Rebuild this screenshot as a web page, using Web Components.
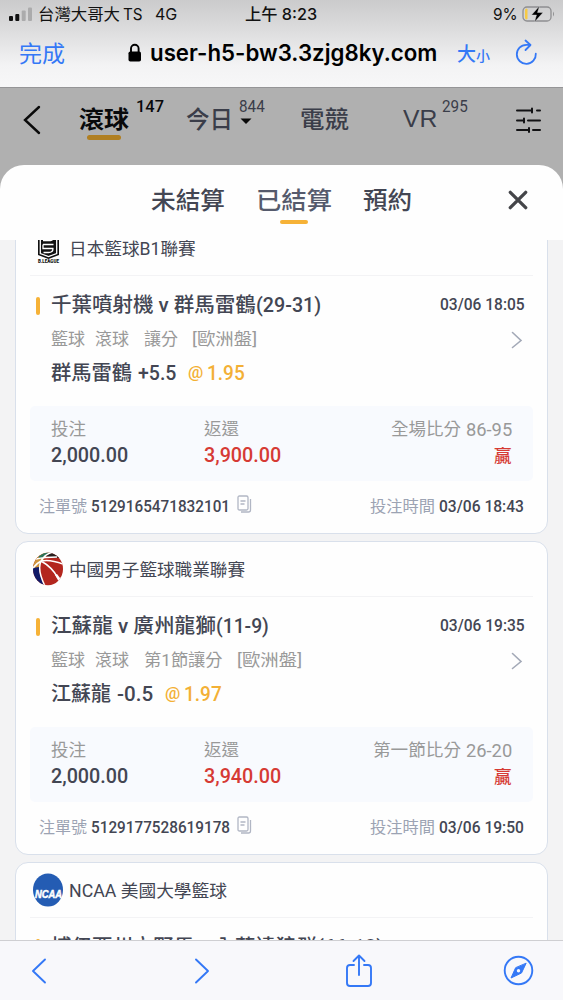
<!DOCTYPE html>
<html lang="zh-Hant">
<head>
<meta charset="utf-8">
<meta name="viewport" content="width=device-width">
<title>已結算</title>
<style>
html,body{margin:0;height:100%;overflow:hidden;background:#b0b0b0}
body{font-family:Roboto,"Noto Sans CJK TC",sans-serif;color:#41444f}
</style>
</head>
<body>
<bet-app></bet-app>
<script>
const define = (name, html, setup) => customElements.define(name, class extends HTMLElement {
  connectedCallback() {
    if (this.shadowRoot) return;
    const t = document.createElement('template');
    t.innerHTML = typeof html === 'function' ? html(this) : html;
    this.attachShadow({ mode: 'open' }).append(t.content.cloneNode(true));
    if (setup) setup(this);
  }
});

// A single line of text condensed or widened to the width given in "w".
define('fit-text', `<style>
:host{display:block;flex:none;white-space:nowrap;line-height:1.4}
span{display:inline-block;transform-origin:0 50%;white-space:pre}
</style><span><slot></slot></span>`, el => {
  const w = +el.getAttribute('w');
  el.style.width = w + 'px';
  const s = el.shadowRoot.querySelector('span');
  s.style.transform = `scaleX(${w / s.offsetWidth})`;
});

define('browser-bar', `<style>
:host{display:block;height:87px;border-bottom:1px solid #959597;background:linear-gradient(#cbcbcc,#dadadb 30%,#f3f3f4 75%,#f7f7f8);box-sizing:content-box;color:#111;font-family:Inter,"Noto Sans CJK TC",sans-serif}
.status{display:flex;height:28px;align-items:center;padding-left:9px;font-size:16px}
.url{display:flex;height:50px;align-items:center;padding-left:19px;color:#3478f6}
svg{flex:none;display:block}
</style>
<div class="status">
<svg width="24" height="16" viewBox="0 0 24 16"><rect y="10" width="4" height="5" rx="1" fill="#111"/><rect x="6.3" y="8" width="4" height="7" rx="1" fill="#111"/><rect x="12.7" y="4.500" width="4" height="10.500" rx="1" fill="#ababac"/><rect x="19" y="1.500" width="4" height="13.500" rx="1" fill="#ababac"/></svg>
<fit-text w="82" style="margin-left:5px">台灣大哥大</fit-text>
<fit-text w="20" style="margin-left:3px">TS</fit-text>
<fit-text w="22" style="margin-left:12px">4G</fit-text>
<fit-text w="72" style="margin-left:68px;font-weight:500">上午 8:23</fit-text>
<fit-text w="25" style="margin-left:176px">9%</fit-text>
<svg width="34" height="18" viewBox="0 0 34 18" style="margin-left:4px"><rect x="1" y="2" width="28" height="14" rx="4" fill="none" stroke="#8f8f91" stroke-width="1.300"/><path d="M31 6.500q2 2.500 0 5z" fill="#8f8f91"/><path d="M3.500 4.800Q3.500 4 5 4v10q-1.500 0-1.500-1z" fill="#f7ca45" stroke="#f7ca45"/><path d="M17.500 1L9.500 10h5l-2 7 8.500-9.500h-5.500z" fill="#000" stroke="#dadadb" stroke-width=".4"/></svg>
</div>
<div class="url">
<fit-text w="46" style="font-size:22.500px;margin-top:2px">完成</fit-text>
<svg width="14" height="20" viewBox="0 0 14 20" style="margin-left:63px"><rect x=".5" y="8.500" width="12.500" height="10" rx="1.800" fill="#000"/><path d="M3 9V5.500a3.800 3.800 0 0 1 7.600 0V9" fill="none" stroke="#000" stroke-width="1.900"/></svg>
<fit-text w="287" style="margin-left:8px;font-size:22.500px;font-weight:600;color:#000">user-h5-bw3.3zjg8ky.com</fit-text>
<fit-text w="19" style="margin-left:20px;font-size:19px;font-weight:500;margin-top:4px">大</fit-text>
<fit-text w="14" style="font-size:14px;margin-top:5px;font-weight:500">小</fit-text>
<svg width="24" height="28" viewBox="0 0 24 28" style="margin-left:25px"><path d="M20.800 14.700A9.500 9.500 0 1 1 11.300 5.800h4M10.500 1.500l5 4.500-5 5" fill="none" stroke="#3478f6" stroke-width="1.800" stroke-linecap="round" stroke-linejoin="round"/></svg>
</div>`);

define('sport-nav', `<style>
:host{display:flex;height:77px;box-sizing:border-box;padding:14px 0 0 22px;background:#b0b0b0;color:#3a3d49;align-items:flex-start;font-size:24px}
.tab{display:flex;flex-direction:column;align-items:center;height:50px;flex:none;padding-top:1.500px;box-sizing:border-box;font-weight:500}
.tab i{width:34px;height:5px;border-radius:3px;background:#b07f22;margin-top:-2px}
.n{font-size:17px;line-height:1;margin-top:-4px}
.sel{color:#08090b;font-weight:700}
svg{display:block;flex:none}
.v{display:flex;flex-direction:column;margin-left:8px}
</style>
<svg width="20" height="34" viewBox="0 0 20 34" style="margin-top:1px"><path d="M17 4L3 17l14 13" fill="none" stroke="#0a0a0a" stroke-width="2.400" stroke-linecap="round"/></svg>
<div class="tab sel" style="margin-left:37px"><fit-text w="50">滾球</fit-text><i></i></div>
<fit-text class="n sel" w="28" style="margin-left:7px;font-weight:500">147</fit-text>
<div class="tab" style="margin-left:22px"><fit-text w="47">今日</fit-text></div>
<div class="v" style="margin-left:6px"><fit-text class="n" w="26">844</fit-text><svg width="14" height="8" viewBox="0 0 14 8" style="margin-top:2px"><path d="M1.500 1.500h11L7 7z" fill="#090909"/></svg></div>
<div class="tab" style="margin-left:35px"><fit-text w="49">電競</fit-text></div>
<div class="tab" style="margin-left:54px;padding-top:0;font-family:'Liberation Sans';font-weight:400"><fit-text w="34">VR</fit-text></div>
<fit-text class="n" w="26" style="margin-left:5px">295</fit-text>
<svg width="27" height="28" viewBox="0 0 27 28" style="margin:4px 0 0 47px"><path d="M2 4.500h15M22 4.500h3M17 2.500v4M2 14.500h7M13 14.500h12M9 12.500v4M2 24h12M18 24h7M14 22v4" fill="none" stroke="#121214" stroke-width="2" stroke-linecap="round"/></svg>`);

define('sheet-tabs', `<style>
:host{display:flex;flex:none;height:75px;box-sizing:border-box;padding:20px 0 0 151px;background:#fefefe;border-radius:24px 24px 0 0;color:#434653;font-size:24px;font-weight:500;align-items:flex-start}
div{display:flex;flex-direction:column;align-items:center;margin:0 31px;color:#555a6c}
i{width:28px;height:4px;border-radius:2px;background:#f6b237;margin-top:1px}
svg{margin:5px 0 0 96px;flex:none}
</style>
<fit-text w="74">未結算</fit-text><div><fit-text w="76">已結算</fit-text><i></i></div><fit-text w="49">預約</fit-text>
<svg width="20" height="20" viewBox="0 0 20 20"><path d="M2.300 2.300l15.400 15.400M17.700 2.300L2.300 17.700" stroke="#444549" stroke-width="3.300" stroke-linecap="round"/></svg>`);

const logos = {
  b: `<svg width="30" height="34" viewBox="0 0 30 34"><path d="M5 3h21v21l-10.500 4L5 24z" fill="#111"/><path d="M7.300 4v18.500l8.200 3 8.200-3V4M10 9.500h7.500q2.500 0 2.500-3M10 13.500h10.500M10 13.500v4h10.500M20 17.500q0 4-4.500 4H10.500" fill="none" stroke="#fff" stroke-width="1.300"/><text x="5" y="32" font-family="Roboto" font-weight="900" font-size="4.500" textLength="21" lengthAdjust="spacingAndGlyphs" fill="#111">B.LEAGUE</text></svg>`,
  cba: `<svg width="30" height="34" viewBox="0 0 30 34"><defs><clipPath id="c"><ellipse cx="15" cy="17" rx="15" ry="16.300"/></clipPath></defs><g clip-path="url(#c)"><path d="M0 0h30v34H0z" fill="#b3261e"/><path d="M0 0h16L8 11 5 17 0 19z" fill="#ce943d"/><path d="M6 4L12 0h5l-5 5-7 2z" fill="#2e7359"/><path d="M12 4L17 0h10l-1 6-9-1z" fill="#27201f"/><path d="M0 16l6-1 1 8 4 11H0z" fill="#111a67"/><path d="M30 23l-3 3-3-4-2 1 4 7-1 4h5z" fill="#fff"/><path d="M8 9q9-2 22 3M3 7q9-2 21-2M8 9Q4 18 12 34M8 9q11 6 17 17M0 16q4-5 8-7Q12 2 20 0" fill="none" stroke="#fff" stroke-width="1.500"/></g></svg>`,
  ncaa: `<svg width="30" height="34" viewBox="0 0 30 34"><ellipse cx="15" cy="17" rx="15" ry="16.500" fill="#245cb3"/><text x="2" y="24.500" font-family="Liberation Sans" font-weight="700" font-style="italic" font-size="10.500" textLength="27" lengthAdjust="spacingAndGlyphs" fill="#fff" stroke="#fff" stroke-width=".5">NCAA</text></svg>`
};
define('league-logo', el => `<style>:host{display:block;width:30px;height:34px;flex:none}svg{display:block}</style>${logos[el.getAttribute('kind')]}`);

const bets = [
  { logo: 'b', league: '日本籃球B1聯賽', lw: 127, t: '千葉噴射機 v 群馬雷鶴', tw: 205, s: '(29-31)', sw: 65, date: '03/06 18:05',
    sub: [['籃球', 34, 0], ['滾球', 34, 10], ['讓分', 34, 15], ['[歐洲盤]', 65, 14]], p: '群馬雷鶴', pw: 81, h: '+5.5', hw: 38, o: '1.95', ret: '3,900.00',
    sl: '全場比分', slw: 70, sc: '86-95', id: '5129165471832101', at: '03/06 18:43' },
  { logo: 'cba', league: '中國男子籃球職業聯賽', lw: 176, t: '江蘇龍 v 廣州龍獅', tw: 165, s: '(11-9)', sw: 53, date: '03/06 19:35',
    sub: [['籃球', 34, 0], ['滾球', 34, 10], ['第1節讓分', 79, 15], ['[歐洲盤]', 65, 14]], p: '江蘇龍', pw: 60, h: '-0.5', hw: 36, o: '1.97', ret: '3,940.00',
    sl: '第一節比分', slw: 88, sc: '26-20', id: '5129177528619178', at: '03/06 19:50' },
  { logo: 'ncaa', league: 'NCAA 美國大學籃球', lw: 158, t: '博伊西州立野馬 v 內華達狼群', tw: 266, s: '(66-18)', sw: 66, date: '03/06 19:00' }
];

define('bet-card', el => {
  const b = bets[+el.getAttribute('index')];
  return `<style>
:host{display:block;flex:none;box-sizing:border-box;height:314px;border:1px solid #d9e0eb;border-radius:13px;background:#fefefe;padding:0 14px;color:#434653;font-weight:500}
.row{display:flex;align-items:center}
.league{height:54px;border-bottom:1px solid #f3f3f5;padding-left:3px;font-size:17.500px;font-weight:400}
.league fit-text{margin:2px 0 0 6px;color:#434653}
.title{height:34px;margin-top:12px;font-size:20px}
.title i{width:4.500px;height:18px;border-radius:2px;background:#f6b237;margin:2px 11px 0 5.500px}
.push{margin-left:auto}
.sub{height:34px;margin-top:1px;padding:0 10px 0 21px;font-size:17px;color:#999;font-weight:400}
.pick{height:34px;margin-top:-1px;padding-left:21px;font-size:20px}
.odd{color:#f3b035}
.box{display:grid;grid-template-columns:153px 1fr auto;box-sizing:border-box;height:75px;margin-top:16px;padding:11px 21px 0;background:#f8fafe;border-radius:5px}
.box>div{display:flex;flex-direction:column}
.lab{display:flex;height:26px;align-items:center;font-size:17px;color:#999;font-weight:400;gap:5px}
.val{display:flex;height:26px;align-items:center;font-size:20px;margin-top:-1px}
.val.win{margin-top:0}
.red{color:#d63a34}
.foot{height:52px;padding:0 9px;font-size:16.500px}
.foot .k{color:#9ca3b3;font-weight:400;margin-right:4px;font-size:16px}
svg{flex:none}
</style>
<div class="row league"><league-logo kind="${b.logo}"></league-logo><fit-text w="${b.lw}">${b.league}</fit-text></div>
<div class="row title"><i></i><fit-text w="${b.tw}">${b.t}</fit-text><fit-text w="${b.sw}">${b.s}</fit-text><fit-text class="push" w="85" style="font-size:17px;margin-right:8px">${b.date}</fit-text></div>
${b.sub ? `<div class="row sub">${b.sub.map(([t, w, m]) => `<fit-text w="${w}" style="margin-left:${m}px">${t}</fit-text>`).join('')}<svg class="push" width="12" height="18" viewBox="0 0 12 18"><path d="M1.500 1.500L10 9.500l-8.500 7" fill="none" stroke="#a3a9b7" stroke-width="1.600" stroke-linecap="round"/></svg></div>
<div class="row pick"><fit-text w="${b.pw}">${b.p}</fit-text><fit-text w="${b.hw}" style="margin-left:6px">${b.h}</fit-text><fit-text class="odd" w="15" style="margin-left:12px;font-size:17px">@</fit-text><fit-text class="odd" w="38" style="margin-left:4px">${b.o}</fit-text></div>
<div class="box"><div><span class="lab"><fit-text w="35">投注</fit-text></span><span class="val"><fit-text w="77">2,000.00</fit-text></span></div>
<div><span class="lab"><fit-text w="35">返還</fit-text></span><span class="val red"><fit-text w="77">${b.ret}</fit-text></span></div>
<div style="align-items:flex-end"><span class="lab"><fit-text w="${b.slw}">${b.sl}</fit-text><fit-text w="46" style="font-size:17.500px">${b.sc}</fit-text></span><span class="val win red"><fit-text w="18" style="font-size:17.500px">贏</fit-text></span></div></div>
<div class="row foot"><fit-text class="k" w="48">注單號</fit-text><fit-text w="139">${b.id}</fit-text><svg width="16" height="18" viewBox="0 0 16 18" style="margin:-6px 0 0 7px"><path d="M2.500 1h7q1.500 0 1.500 1.500v11q0 1.500-1.500 1.500h-7Q1 15 1 13.500v-11Q1 1 2.500 1zM3.500 6h5M3.500 9h4M13.500 4v11q0 2-2 2H4" fill="none" stroke="#b1b6c4" stroke-width="1.300"/></svg>
<fit-text class="k push" w="65">投注時間</fit-text><fit-text w="85">${b.at}</fit-text></div>` : ''}`;
});

define('bet-list', `<style>
:host{display:block;flex:1;min-height:0;overflow:hidden;background:#f3f3f4}
div{display:flex;flex-direction:column;gap:7px;margin-top:-20px;padding:0 15px}
</style><div><slot></slot></div>`);

define('tool-bar', `<style>
:host{display:flex;flex:none;height:60px;box-sizing:border-box;background:#f8f8fb;border-top:1px solid #cfcfd2;padding:0 29px 0 31px;align-items:center}
svg{fill:none;stroke:#3478f6;stroke-width:1.900;stroke-linecap:round;stroke-linejoin:round}
</style>
<svg width="17" height="28" viewBox="0 0 17 28"><path d="M14 2.500L2 14l12 11.500"/></svg>
<svg width="17" height="28" viewBox="0 0 17 28" style="margin-left:145px"><path d="M3 2.500L15 14 3 25.500"/></svg>
<svg width="28" height="34" viewBox="0 0 28 34" style="margin-left:135px"><path d="M9 11H5q-3 0-3 3v15q0 3 3 3h18q3 0 3-3V14q0-3-3-3h-4M14 21V2M8.500 7L14 1.500 19.500 7"/></svg>
<svg width="31" height="31" viewBox="0 0 31 31" style="margin-left:auto"><circle cx="15.500" cy="15.500" r="13.800"/><path d="M23 8.500l-4.500 9.500L8 23l4.500-10z" fill="#3478f6" stroke-width="1"/><circle cx="15.500" cy="15.700" r="1.700" fill="#f8f8fb" stroke="none"/></svg>`);

define('bet-app', `<style>:host{display:flex;flex-direction:column;width:563px;height:1000px;overflow:hidden}</style>
<browser-bar></browser-bar><sport-nav></sport-nav><sheet-tabs></sheet-tabs>
<bet-list><bet-card index="0"></bet-card><bet-card index="1"></bet-card><bet-card index="2"></bet-card></bet-list>
<tool-bar></tool-bar>`);
</script>
</body>
</html>
